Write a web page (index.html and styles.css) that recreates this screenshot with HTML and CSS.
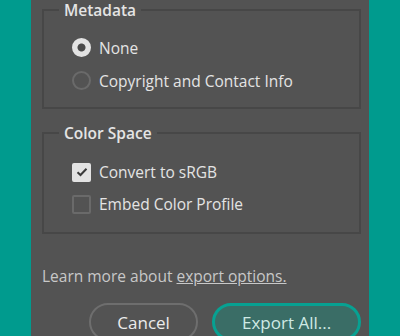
FILE: index.html
```html
<!DOCTYPE html>
<html lang="en">
<head>
    <meta charset="UTF-8">
    <title>Export</title>
    <link rel="stylesheet" href="styles.css">
</head>
<body>
    <div class="side"></div>
    <div class="dialog">
        <fieldset class="group meta">
            <legend>Metadata</legend>
            <label class="option">
                <span class="radio checked"></span>
                <span>None</span>
            </label>
            <label class="option">
                <span class="radio"></span>
                <span>Copyright and Contact Info</span>
            </label>
        </fieldset>

        <fieldset class="group color">
            <legend>Color Space</legend>
            <label class="option">
                <span class="check checked">
                    <svg width="12" height="10" viewBox="0 0 12 10"><path d="M1.5 5.2 L4.5 8 L10.5 1.8" fill="none" stroke="#3a3a3a" stroke-width="2"/></svg>
                </span>
                <span>Convert to sRGB</span>
            </label>
            <label class="option">
                <span class="check"></span>
                <span>Embed Color Profile</span>
            </label>
        </fieldset>

        <p class="learn">Learn more about <a href="#">export options.</a></p>

        <div class="actions">
            <button class="btn cancel">Cancel</button>
            <button class="btn primary">Export All...</button>
        </div>
    </div>
    <div class="side"></div>
</body>
</html>
```

FILE: styles.css
```css
body {
    margin: 0;
    height: 336px;
    overflow: hidden;
    display: flex;
    background-color: #009b8e;
    font-family: "Open Sans", "Noto Sans", sans-serif;
    font-size: 15.5px;
    color: #e4e4e4;
}

.side {
    width: 31px;
    flex-shrink: 0;
}

.dialog {
    width: 338px;
    background-color: #535353;
    padding: 0 8px 0 11px;
    box-sizing: border-box;
}

.group {
    margin: 0;
    border: 2px solid #474747;
    padding: 8px 0 0 0;
    box-sizing: border-box;
}

.meta {
    margin-top: 1px;
    height: 108px;
    padding-top: 12px;
}

.color {
    margin-top: 15px;
    height: 110px;
    padding-top: 14px;
}

legend {
    margin-left: 15px;
    padding: 0 5px;
    font-weight: 600;
    line-height: 18px;
}

.option {
    display: flex;
    align-items: center;
    height: 33px;
    gap: 8px;
    margin-left: 27px;
}

.color .option {
    height: 32px;
}

.radio {
    width: 15px;
    height: 15px;
    border-radius: 50%;
    border: 2px solid #6a6a6a;
    flex-shrink: 0;
    box-sizing: content-box;
    margin-left: 1px;
}

.radio.checked {
    border-color: #e3e3e3;
    background: radial-gradient(circle, #4a4a4a 0 3.5px, #e3e3e3 4.5px);
}

.check {
    width: 15px;
    height: 15px;
    border: 2px solid #6a6a6a;
    border-radius: 2px;
    flex-shrink: 0;
    margin-left: 1px;
    display: flex;
    align-items: center;
    justify-content: center;
}

.check.checked {
    background-color: #e3e3e3;
    border-color: #e3e3e3;
}

.learn {
    margin: 31px 0 0 0;
    color: #c8c8c8;
}

.learn a {
    color: #c8c8c8;
}

.actions {
    display: flex;
    gap: 14px;
    margin-top: 16px;
    padding-left: 47px;
}

.btn {
    font-family: inherit;
    font-size: 17px;
    height: 38px;
    border-radius: 19px;
    box-sizing: border-box;
    cursor: pointer;
}

.cancel {
    width: 110px;
    background: transparent;
    border: 2px solid #6e6e6e;
    color: #ececec;
}

.primary {
    width: 150px;
    background-color: #3a6d66;
    border: 3px solid #07a192;
    color: #cfe9e4;
}
```
